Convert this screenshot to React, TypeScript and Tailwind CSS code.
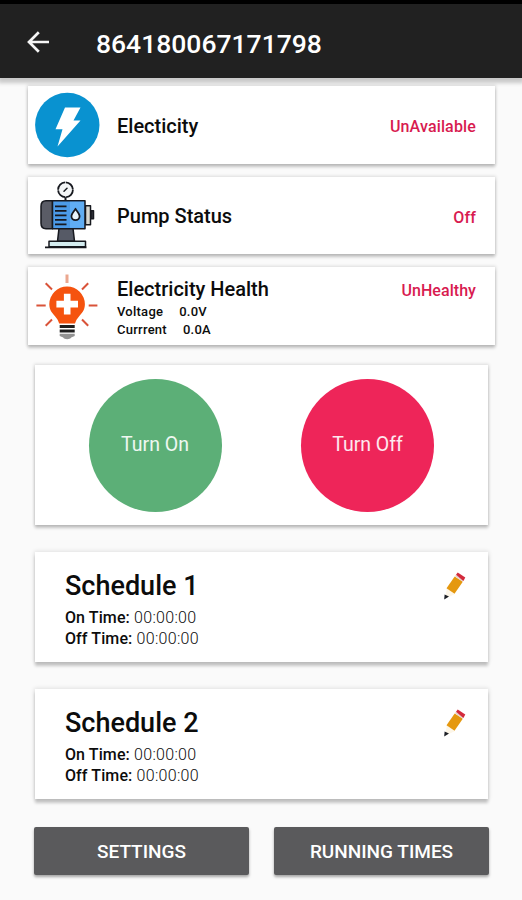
import type { ReactNode } from "react";
import { clsx } from "clsx";

const cardShadow = "shadow-[0_3px_3px_rgba(0,0,0,0.2),0_0_3px_1px_rgba(0,0,0,0.12)]";
const raisedShadow = "shadow-[0_4px_3px_rgba(0,0,0,0.2),0_0_4px_1px_rgba(0,0,0,0.1)]";

function BackArrow() {
   return (
      <svg width="24" height="24" viewBox="0 0 24 24" fill="none" stroke="#f5f5f5" strokeWidth="2.7">
         <path d="M23 12H3M12.800 2.200 3 12l9.800 9.800" />
      </svg>
   );
}

function BoltIcon() {
   return (
      <svg width="66" height="66" viewBox="0 0 66 66">
         <circle cx="33.300" cy="33" r="32.200" fill="#0992d0" />
         <path d="M31 15.500h15.500L39.500 28.500h7L23.500 54.500l5-17.200h-7z" fill="#fff" />
      </svg>
   );
}

function PumpIcon() {
   return (
      <svg width="66" height="70" viewBox="0 0.700 66 70" stroke="#17191f" strokeWidth="1.500" strokeLinejoin="round">
         <path d="M31.500 17v6" strokeWidth="2" />
         <circle cx="31.500" cy="10.500" r="7.400" fill="#f4f6f7" strokeWidth="1.800" strokeDasharray="10.900 0.720" />
         <path d="m30 12 3-3" strokeLinecap="round" />
         <path d="M51.500 26.500h5v19h-5z" fill="#d8d8d2" />
         <path d="M57 31.500h2.500v8H57z" fill="#33353d" />
         <path d="M25 49h14l1.500 13h-17z" fill="#565a66" />
         <path d="M15 62h36.500v5.500H15z" fill="#d4edf0" />
         <path d="M11 68h41.500" strokeWidth="1.800" />
         <path d="M12 21.500h6.500v28H12c-3.500 0-5-2.500-5-5.500V27c0-3 1.500-5.500 5-5.500z" fill="#5a5c66" />
         <path d="M18.500 21.500h32.500v28H18.500z" fill="#4c9be8" />
         <path d="M36 22.500h14v26H36z" fill="#60adf3" stroke="none" />
         <path d="M21 27h11.500M21 31.500h11.500M21 36h11.500M21 40.500h11.500M21 45h11.500" strokeWidth="1.800" />
         <path d="M41.500 29.500c1.600 3 4.100 4.800 4.100 7.300a4.100 4.100 0 0 1-8.200 0c0-2.500 2.500-4.300 4.100-7.300z" fill="#e8f4fb" strokeWidth="1.800" />
      </svg>
   );
}

function HealthIcon() {
   return (
      <svg width="66" height="70" viewBox="0.300 0 66 70">
         <g stroke="#d95339" strokeWidth="2">
            <path d="M33.300 3.500V12" stroke="#eba78f" strokeWidth="3" />
            <path d="m12 12.300 6.300 6.200M54.500 12.300l-6.200 6.200M2.700 34.500H12M55 34.500h8.700M12 54.800l6.300-6.300M54.500 54.800l-6.200-6.300" />
         </g>
         <path
            d="M33.400 15.500a17.800 17.800 0 0 0-17.800 17.800c0 6 3.200 9.200 5.900 12.100 2 2.100 3.200 4.500 4 7.100h15.800c.8-2.600 2-5 4-7.100 2.700-2.900 5.900-6.100 5.900-12.100A17.800 17.800 0 0 0 33.400 15.500z"
            fill="#f5530f"
         />
         <path d="M30.200 22.800h6.600v7h7.500v6.800h-7.500v7h-6.600v-7h-7.500v-6.800h7.500z" fill="#fff" />
         <path d="M26 55.500h15M26 60h15" stroke="#1e1e1e" strokeWidth="2.800" />
         <path d="M26 62.700h15v2.300l-3.500 1.500c-1 2.200-7 2.200-8 0L26 65z" fill="#929292" />
      </svg>
   );
}

function PencilIcon() {
   return (
      <svg width="24" height="30" viewBox="0 0 24 30">
         <path d="M5 16.500 2.600 27l10-4.800z" fill="#fdf6e8" />
         <path d="M4.500 16.300 12.700 4.500 20.800 9.800l-8.300 12z" fill="#e5980f" />
         <path d="m13 4.200 .9-1.500 7.800 5.600-.9 1.500z" fill="#e6d3cc" />
         <path d="m14 2.800 1.700-2.200 7.600 4.900-1.900 3.500z" fill="#d32a3c" />
         <path d="m2.600 22.600 4.400 2L2.200 27.500z" fill="#1d2027" />
      </svg>
   );
}

type StatusCardProps = {
   icon: ReactNode;
   title: string;
   status: string;
   readings?: { label: string; value: string }[];
};

function StatusCard({ icon, title, status, readings }: StatusCardProps) {
   return (
      <section className={clsx("flex h-[77.5px] bg-white pr-[19px]", cardShadow, readings ? "items-start" : "items-center")}>
         <div className="ml-1.5 flex h-full w-[83px] shrink-0 items-center">{icon}</div>
         <div className={clsx("grow", readings ? "pt-[9px]" : "pt-0.5")}>
            <h2 className="text-[20px] leading-[26px] font-medium">{title}</h2>
            {readings?.map(({ label, value }) => (
               <p key={label} className="relative top-px flex gap-4 text-[13px] leading-[18px] font-medium tracking-[0.25px]">
                  <span>{label}</span>
                  <span>{value}</span>
               </p>
            ))}
         </div>
         <p
            className={clsx(
               "text-[16px] leading-5 font-medium text-[#d81b50]",
               readings ? "pt-3.5 tracking-[0.05px]" : "pt-[5px] tracking-[0.15px]"
            )}
         >
            {status}
         </p>
      </section>
   );
}

function ScheduleCard({ title }: { title: string }) {
   return (
      <section className={clsx("flex h-[110px] justify-between bg-white pr-[22px] pl-[30px]", raisedShadow)}>
         <div className="pt-[18px]">
            <h2 className="text-[27px] leading-8 font-medium">{title}</h2>
            <p className="mt-[5px] text-[16px] leading-[21px] font-light tracking-[0.3px]">
               <span className="font-medium tracking-[0.1px]">On Time:</span> 00:00:00
            </p>
            <p className="text-[16px] leading-[21px] font-light tracking-[0.3px]">
               <span className="font-medium tracking-[0.1px]">Off Time:</span> 00:00:00
            </p>
         </div>
         <button className="mt-5 h-[30px]" aria-label={`Edit ${title}`}>
            <PencilIcon />
         </button>
      </section>
   );
}

export default function App() {
   return (
      <div className="h-[900px] w-[522px] overflow-hidden bg-[#fafafa] font-['Roboto',sans-serif] text-[#0c0c0c]">
         <div className="h-1 bg-black" />
         <header className="flex h-[74px] items-center bg-[#212121] pt-0.5 pl-[26px] shadow-[0_3px_4px_2px_rgba(0,0,0,0.2)]">
            <BackArrow />
            <h1 className="ml-[46px] pt-[3px] text-[26.5px] leading-8 font-medium text-white">864180067171798</h1>
         </header>

         <main>
            <div className="flex flex-col gap-[13px] pt-2 pr-[27px] pl-7">
               <StatusCard icon={<BoltIcon />} title="Electicity" status="UnAvailable" />
               <StatusCard icon={<PumpIcon />} title="Pump Status" status="Off" />
               <StatusCard
                  icon={<HealthIcon />}
                  title="Electricity Health"
                  status="UnHealthy"
                  readings={[
                     { label: "Voltage", value: "0.0V" },
                     { label: "Currrent", value: "0.0A" },
                  ]}
               />
            </div>

            <div className="mt-[20.5px] flex flex-col gap-[27px] pr-[34px] pl-[35px]">
               <section className={clsx("flex h-40 items-center justify-between bg-white pr-[54px] pl-[53.5px]", cardShadow)}>
                  <button className="size-[133px] rounded-full bg-[#5caf77] text-[19.5px] text-white/90">Turn On</button>
                  <button className="size-[133px] rounded-full bg-[#ee2559] text-[19.5px] text-white/90">Turn Off</button>
               </section>
               <ScheduleCard title="Schedule 1" />
               <ScheduleCard title="Schedule 2" />
            </div>

            <div className="mt-7 grid grid-cols-2 gap-[25px] pr-[33px] pl-[34px]">
               <button className="h-12 rounded-xs bg-[#5a5a5c] pt-[3px] text-[19px] font-medium text-white shadow-[0_2px_3px_rgba(0,0,0,0.35)]">SETTINGS</button>
               <button className="h-12 rounded-xs bg-[#5a5a5c] pt-[3px] text-[19px] font-medium text-white shadow-[0_2px_3px_rgba(0,0,0,0.35)]">RUNNING TIMES</button>
            </div>
         </main>
      </div>
   );
}
